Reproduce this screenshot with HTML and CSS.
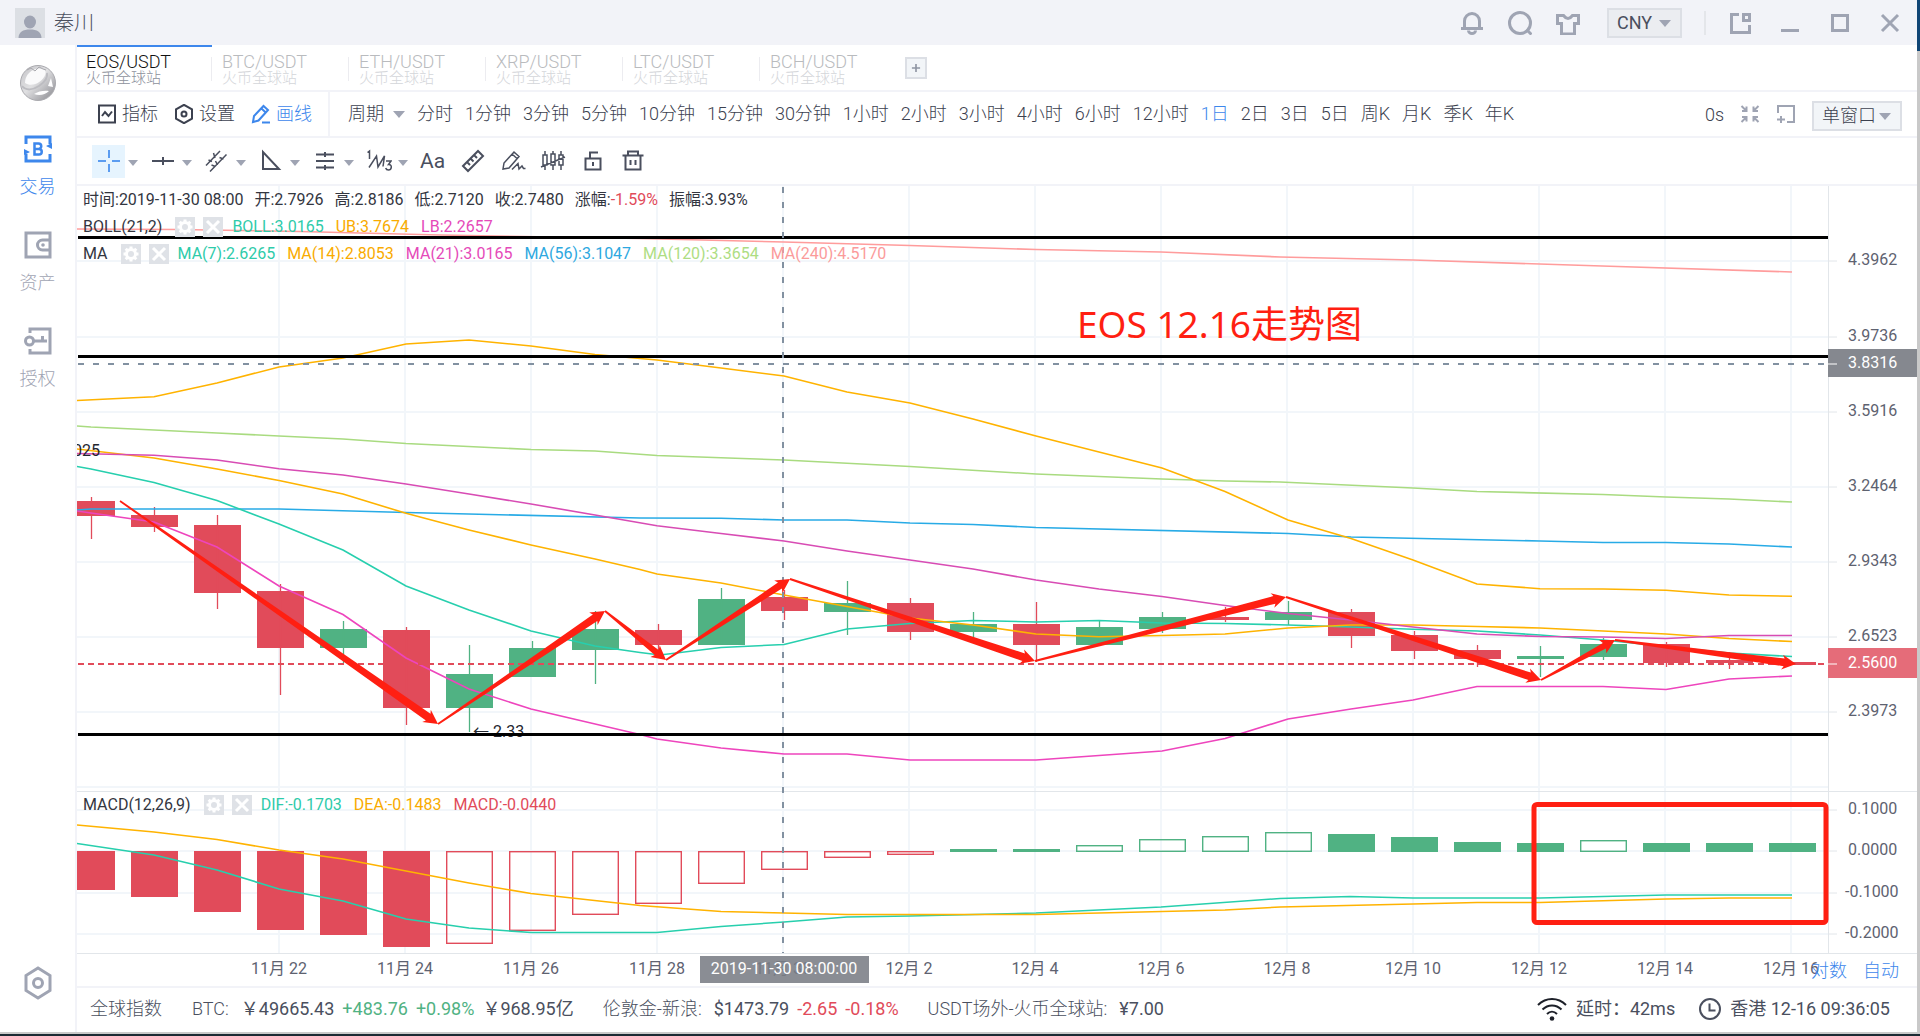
FILE: index.html
```html
<!DOCTYPE html>
<html lang="zh-CN">
<head>
<meta charset="utf-8">
<title>EOS/USDT</title>
<link rel="stylesheet" href="styles.css">
</head>
<body>
<div class="window">
  <header class="titlebar">
    <svg class="avatar" viewBox="0 0 30 30" aria-hidden="true"><rect width="30" height="30" fill="#dcdfe4"/><ellipse cx="15" cy="14" rx="6" ry="6.5" fill="#9fa4b3"/><path d="M3.500 30c0-6 4.500-8.500 11.500-8.500s11.500 2.500 11.500 8.500z" fill="#9fa4b3"/></svg>
    <span class="user">秦川</span>
    <div class="title-tools">
      <button class="icon-btn" aria-label="通知"><svg viewBox="0 0 24 24"><path d="M4.500 17.500V10a7.500 7.500 0 0 1 15 0v7.500M1 17.500h22M8.500 19.500a3.500 3 0 0 0 7 0"/></svg></button>
      <button class="icon-btn" aria-label="搜索"><svg viewBox="0 0 24 24"><circle cx="12" cy="12" r="10.500"/><path d="M18.500 18.500l5 5"/></svg></button>
      <button class="icon-btn" aria-label="皮肤"><svg viewBox="0 0 24 24"><path d="M1.500 4.500h6q4.500 6 9 0h6v8h-4V23h-13V12.500h-4z"/></svg></button>
      <span class="picker picker-currency"><select aria-label="货币"><option>CNY</option></select></span>
    </div>
    <i class="title-divider"></i>
    <div class="window-tools">
      <button class="icon-btn" aria-label="弹出"><svg viewBox="0 0 24 24"><path d="M11 3.500H3.500v18h18V14M15.500 3.500h6v6h-6z"/></svg></button>
      <button class="icon-btn" aria-label="最小化"><svg viewBox="0 0 24 24"><path d="M3 19.500h18"/></svg></button>
      <button class="icon-btn" aria-label="最大化"><svg viewBox="0 0 24 24"><path d="M4.500 4.500h15v15h-15z"/></svg></button>
      <button class="icon-btn" aria-label="关闭"><svg viewBox="0 0 24 24"><path d="M4 4l16 16M20 4L4 20"/></svg></button>
    </div>
  </header>

  <div class="body">
    <nav class="sidebar">
      <svg class="logo" viewBox="0 0 36 36" aria-hidden="true">
        <defs><linearGradient id="ball" x1="0" y1="0" x2="1" y2="1"><stop offset="0" stop-color="#c4c4c8"/><stop offset=".45" stop-color="#e0e0e2"/><stop offset="1" stop-color="#85858b"/></linearGradient></defs>
        <circle cx="18" cy="18" r="17.500" fill="url(#ball)" stroke="#a9a9ae"/>
        <path d="M5 18C5 10 11 4 19 3.500c8 0 8 5 4 10S11 22 5 18z" fill="#fafafb"/>
        <path d="M7 5l4-2 4 3 4-4 4 2 3 1" fill="none" stroke="#a8a8ad"/>
        <path d="M28 21l3-8 2 9zM14 29c4-3 11-4 15-3-4 4-10 5-15 3z" fill="#fdfdfe"/>
        <path d="M2 21c4 5 11 4 17 0s9-8 8-13" fill="none" stroke="#bcbcc1" stroke-width="2"/>
      </svg>
      <a class="nav-item active" href="#trade"><svg viewBox="0 0 28 28"><path d="M2 9V2h24v7M2 19v7h24v-7" stroke-width="3" fill="none"/><path class="solid" d="M0 14l6 3-6 3zM28 14l-6-3 6-3z"/><path d="M10.500 8.500v11h4.500a2.700 2.700 0 0 0 0-5.500h-4.500h4a2.600 2.600 0 0 0 0-5.500z" stroke-width="2.500" fill="none"/></svg><span>交易</span></a>
      <a class="nav-item" href="#assets"><svg viewBox="0 0 28 28"><path d="M2 2h24v24H2z" stroke-width="3" fill="none"/><path d="M26 9H18.500a5 5 0 0 0 0 10H26" stroke-width="3" fill="none"/><circle class="solid" cx="19" cy="14" r="1.800"/></svg><span>资产</span></a>
      <a class="nav-item" href="#auth"><svg viewBox="0 0 28 28"><path d="M6 6V2h20v24H6v-4" stroke-width="3" fill="none"/><circle cx="5.500" cy="14" r="4" stroke-width="3" fill="none"/><path d="M10 14h13M18.500 14V9" stroke-width="3"/></svg><span>授权</span></a>
      <button class="nav-settings" aria-label="设置"><svg viewBox="0 0 28 34"><path d="M14 2l12 7.500v15L14 32 2 24.500v-15z"/><circle cx="14" cy="17" r="4.500"/></svg></button>
    </nav>

    <main class="workspace">
      <div class="tabs">
        <button class="tab current"><b>EOS/USDT</b><small>火币全球站</small></button>
        <button class="tab"><b>BTC/USDT</b><small>火币全球站</small></button>
        <button class="tab"><b>ETH/USDT</b><small>火币全球站</small></button>
        <button class="tab"><b>XRP/USDT</b><small>火币全球站</small></button>
        <button class="tab"><b>LTC/USDT</b><small>火币全球站</small></button>
        <button class="tab"><b>BCH/USDT</b><small>火币全球站</small></button>
        <button class="add-tab" aria-label="添加"><svg viewBox="0 0 22 22"><path d="M11 6v10M6 11h10"/></svg></button>
      </div>

      <div class="toolbar">
        <div class="modes">
          <button class="mode"><svg viewBox="0 0 20 20"><path d="M2 1.500h16v17H2zM5 12l3-4 3.500 4L15 7.500"/></svg>指标</button>
          <button class="mode"><svg viewBox="0 0 20 20"><path d="M10 .800l8 4.600v9.200l-8 4.600-8-4.600V5.400z"/><circle cx="10" cy="10" r="2.500"/></svg>设置</button>
          <button class="mode on"><svg viewBox="0 0 20 20"><path d="M2 18l1-6L12.500 2l4.500 4L7.500 16.500zM10.500 4.500l4.200 4M11 18.500h8"/></svg>画线</button>
        </div>
        <div class="periods">
          <button class="period menu">周期<i class="caret"></i></button>
          <button class="period">分时</button><button class="period">1分钟</button><button class="period">3分钟</button><button class="period">5分钟</button><button class="period">10分钟</button><button class="period">15分钟</button><button class="period">30分钟</button><button class="period">1小时</button><button class="period">2小时</button><button class="period">3小时</button><button class="period">4小时</button><button class="period">6小时</button><button class="period">12小时</button><button class="period on">1日</button><button class="period">2日</button><button class="period">3日</button><button class="period">5日</button><button class="period">周K</button><button class="period">月K</button><button class="period">季K</button><button class="period">年K</button>
        </div>
        <div class="view-tools">
          <span>0s</span>
          <button class="view-btn" aria-label="收缩"><svg viewBox="0 0 20 20"><path d="M1.500 2l5 5M6.500 2.500V7H2M18.500 2l-5 5M13.500 2.500V7H18M1.500 18l5-5M6.500 17.500V13H2M18.500 18l-5-5M13.500 17.500V13H18"/></svg></button>
          <button class="view-btn" aria-label="添加窗口"><svg viewBox="0 0 20 20"><path d="M2 9V2h16v16h-7M5 12v7M1 15.500h8"/></svg></button>
          <span class="picker picker-window"><select aria-label="窗口布局"><option>单窗口</option></select></span>
        </div>
      </div>

      <div class="drawbar">
        <button class="tool on" aria-label="十字光标"><svg viewBox="0 0 24 24"><path d="M12 1v8M12 15v8M1 12h8M15 12h8"/></svg></button><button class="more" aria-label="更多光标"><i class="caret"></i></button>
        <button class="tool" aria-label="直线"><svg viewBox="0 0 24 24"><path d="M1 12h22M12 8v8"/></svg></button><button class="more" aria-label="更多直线"><i class="caret"></i></button>
        <button class="tool" aria-label="平行线"><svg viewBox="0 0 24 24"><path class="fine" d="M1 16.500L15 2M5 22.500L21.500 5.500M8.500 4l1.500 5M3.500 11l3.500 1.500M10.500 12l2 4M14.500 8.500l4 1.500M6.500 16l4 1.500"/></svg></button><button class="more" aria-label="更多平行线"><i class="caret"></i></button>
        <button class="tool" aria-label="图形"><svg viewBox="0 0 24 24"><path d="M4 3v17h16z"/></svg></button><button class="more" aria-label="更多图形"><i class="caret"></i></button>
        <button class="tool" aria-label="斐波那契"><svg viewBox="0 0 24 24"><path d="M3 5.500h18M3 12h18M3 18.500h18M12 3v5M12 16v5"/></svg></button><button class="more" aria-label="更多斐波那契"><i class="caret"></i></button>
        <button class="tool" aria-label="波浪"><svg viewBox="0 0 26 24"><path class="fine" d="M1.500 3.500L3.500 2v8M3 18.500L10.500 7l1.500 11 6.500-11-1.500 10.500M20 12h5l-2.500 3.500c4-.5 3.500 5.500 0 5.500-1.500 0-2.500-.8-2.800-2"/></svg></button><button class="more" aria-label="更多波浪"><i class="caret"></i></button>
        <button class="tool text-tool">Aa</button>
        <button class="tool" aria-label="尺子"><svg viewBox="0 0 24 24"><path d="M2 17L17 2l5 5L7 22zM6 13l3 3M9.500 9.500l3 3M13 6l3 3"/></svg></button>
        <button class="tool" aria-label="画笔"><svg viewBox="0 0 26 24"><path class="fine" d="M3 20l1-6L14 3l5 4.500L9 19zM12 5l5 4.500M12 20.500l6-6 1 5.500 3-3 1.500 2.500h2"/></svg></button>
        <button class="tool" aria-label="K线"><svg viewBox="0 0 26 24"><path class="fine" d="M3 6h4v10H3zM11 5h4v11h-4zM19 6h4v10h-4zM5 2v4M5 16v5M13 2v3M13 16v5M21 2v4M21 16v5M1 18L25 8"/></svg></button>
        <button class="tool" aria-label="锁定"><svg viewBox="0 0 24 24"><path d="M4.500 9.500h15v11h-15zM9 9.500v-6h8M12 13v4"/></svg></button>
        <button class="tool" aria-label="删除"><svg viewBox="0 0 24 24"><path d="M1.500 6.500h21M4.500 6.500v14h15v-14M7 6V2.500h10V6M9.500 11v5M14.500 11v5"/></svg></button>
      </div>

      <section class="chart">
        <svg class="plot" viewBox="77 186 1840 800" role="img" aria-label="EOS/USDT K线图"></svg>
        <div class="legend legend-price">
          <p class="quote"><span>时间:2019-11-30 08:00</span><span>开:2.7926</span><span>高:2.8186</span><span>低:2.7120</span><span>收:2.7480</span><span>涨幅:<em>-1.59%</em></span><span>振幅:3.93%</span></p>
          <p class="study">BOLL(21,2)<button class="chip" aria-label="BOLL 设置"><svg viewBox="0 0 20 20"><circle cx="10" cy="10" r="4.500"/><path d="M10 2.500v3M10 14.500v3M2.500 10h3M14.500 10h3M4.700 4.700l2 2M13.300 13.300l2 2M4.700 15.300l2-2M13.300 6.700l2-2"/></svg></button><button class="chip" aria-label="关闭 BOLL"><svg viewBox="0 0 20 20"><path d="M4 4l12 12M16 4L4 16"/></svg></button><span class="teal">BOLL:3.0165</span><span class="amber">UB:3.7674</span><span class="pink">LB:2.2657</span></p>
          <p class="study">MA<button class="chip" aria-label="MA 设置"><svg viewBox="0 0 20 20"><circle cx="10" cy="10" r="4.500"/><path d="M10 2.500v3M10 14.500v3M2.500 10h3M14.500 10h3M4.700 4.700l2 2M13.300 13.300l2 2M4.700 15.300l2-2M13.300 6.700l2-2"/></svg></button><button class="chip" aria-label="关闭 MA"><svg viewBox="0 0 20 20"><path d="M4 4l12 12M16 4L4 16"/></svg></button><span class="teal">MA(7):2.6265</span><span class="amber">MA(14):2.8053</span><span class="pink">MA(21):3.0165</span><span class="sky">MA(56):3.1047</span><span class="lime">MA(120):3.3654</span><span class="salmon">MA(240):4.5170</span></p>
        </div>
        <div class="legend legend-macd">
          <p class="study">MACD(12,26,9)<button class="chip" aria-label="MACD 设置"><svg viewBox="0 0 20 20"><circle cx="10" cy="10" r="4.500"/><path d="M10 2.500v3M10 14.500v3M2.500 10h3M14.500 10h3M4.700 4.700l2 2M13.300 13.300l2 2M4.700 15.300l2-2M13.300 6.700l2-2"/></svg></button><button class="chip" aria-label="关闭 MACD"><svg viewBox="0 0 20 20"><path d="M4 4l12 12M16 4L4 16"/></svg></button><span class="teal">DIF:-0.1703</span><span class="amber">DEA:-0.1483</span><span class="red">MACD:-0.0440</span></p>
        </div>
        <div class="scale-tools"><button>对数</button><button>自动</button></div>
      </section>

      <footer class="status">
        <span class="index">全球指数</span>
        <span class="quote-group"><span class="name">BTC:</span><span>￥49665.43</span><span class="up">+483.76</span><span class="up">+0.98%</span><span>￥968.95亿</span></span>
        <span class="quote-group"><span class="name">伦敦金-新浪:</span><span>$1473.79</span><span class="down">-2.65</span><span class="down">-0.18%</span></span>
        <span class="quote-group"><span class="name">USDT场外-火币全球站:</span><span>¥7.00</span></span>
        <span class="net"><svg viewBox="0 0 30 24" aria-hidden="true"><path d="M1 8C9 0 21 0 29 8M5.500 12.500c5.500-5.500 13.500-5.500 19 0M10 17c3-3 7-3 10 0"/><circle cx="15" cy="21.500" r="2.300"/></svg>延时：42ms</span>
        <span class="clock"><svg viewBox="0 0 22 22" aria-hidden="true"><circle cx="11" cy="11" r="10"/><path d="M10.500 5.500v7h6"/></svg>香港 12-16 09:36:05</span>
      </footer>
    </main>
  </div>
</div>
<script src="chart.js"></script>
</body>
</html>
```
FILE: styles.css
```css
* { box-sizing: border-box; }

body {
  margin: 0;
  padding: 0 3px 4px 0;
  min-height: 100vh;
  font-family: Roboto, "Noto Sans CJK SC", sans-serif;
  font-size: 18px;
  color: #4a4f5e;
  background: linear-gradient(#0f4575 51px, #c9c9c9 51px, #c9c9c9 calc(100% - 2px), #1b2a33 calc(100% - 2px));
}

button, select {
  font: inherit;
  color: inherit;
  background: none;
  border: 0;
  padding: 0;
  margin: 0;
  white-space: nowrap;
}

svg { display: block; }
p { margin: 0; }

.window {
  min-height: calc(100vh - 4px);
  display: flex;
  flex-direction: column;
  background: #fff;
}

/* title bar */
.titlebar {
  height: 45px;
  display: flex;
  align-items: center;
  padding: 0 15px;
  background: #f2f3f8;
}
.avatar { width: 30px; height: 30px; }
.user { margin-left: 9px; font-size: 20px; font-weight: 300; line-height: 30px; }
.title-tools { margin-left: auto; display: flex; align-items: center; gap: 24px; }
.icon-btn svg { width: 24px; height: 24px; fill: none; stroke: #9fa4b3; stroke-width: 3; }
.title-divider { width: 2px; height: 24px; margin: 0 22px; background: #e4e6ea; }
.window-tools { display: flex; gap: 26px; }

.picker {
  position: relative;
  display: flex;
  height: 30px;
  border: 2px solid #dcdfe5;
  background: #f2f5f8;
}
.picker select { width: 100%; appearance: none; line-height: 26px; }
.picker::after {
  content: "";
  position: absolute;
  right: 9px;
  top: 10px;
  border: 6px solid transparent;
  border-top: 7px solid #9fa4b3;
  border-bottom: 0;
  pointer-events: none;
}
.picker-currency { width: 75px; margin-left: 3px; padding-left: 8px; background: #ebedf1; }
.picker-window { width: 90px; margin-top: 3px; padding-left: 8px; }

/* sidebar */
.body { flex: 1; display: flex; }
.sidebar {
  width: 77px;
  padding: 20px 0 32px;
  border-right: 2px solid #f2f3f8;
  display: flex;
  flex-direction: column;
  align-items: center;
}
.logo { width: 36px; height: 36px; margin-bottom: 34px; }
.nav-item {
  height: 96px;
  display: flex;
  flex-direction: column;
  align-items: center;
  gap: 10px;
  color: #9fa4b3;
  font-weight: 300;
  line-height: 28px;
  text-decoration: none;
}
.nav-item svg { width: 28px; height: 28px; stroke: currentColor; }
.nav-item .solid { fill: currentColor; stroke: none; }
.nav-item.active { color: #3d87ec; }
.nav-settings { margin-top: auto; }
.nav-settings svg { width: 28px; height: 34px; fill: none; stroke: #9fa4b3; stroke-width: 3; }

/* market tabs */
.workspace { flex: 1; min-width: 0; display: flex; flex-direction: column; }
.tabs { height: 47px; display: flex; border-bottom: 2px solid #f2f3f8; }
.tab {
  width: 137px;
  display: flex;
  flex-direction: column;
  align-items: flex-start;
  padding: 7px 0 0 10px;
  border-top: 2px solid transparent;
  text-align: left;
  color: #b9bbbe;
  background: linear-gradient(#ececf0, #ececf0) right 10px / 1px 24px no-repeat;
}
.tab:nth-child(6) { background: none; }
.tab b { font-weight: 300; line-height: 16px; }
.tab small { font-size: 15px; font-weight: 300; line-height: 16px; color: #d4d6da; }
.tab.current { width: 135px; padding-left: 9px; color: #111; border-top-color: #3d87ec; }
.tab.current small { color: #8d919c; }
.add-tab { align-self: center; margin-left: 8px; }
.add-tab svg { width: 22px; height: 22px; stroke: #8f95a3; stroke-width: 2; border: 2px solid #dcdfe5; background: #f2f5f8; }

/* indicator and period bar */
.toolbar { height: 46px; display: flex; border-bottom: 2px solid #f2f3f8; font-weight: 300; color: #3c414f; }
.modes { display: flex; align-items: center; gap: 16px; padding: 0 16px 0 20px; border-right: 2px solid #f2f3f8; }
.mode { display: flex; align-items: center; gap: 5px; line-height: 26px; }
.mode svg { width: 20px; height: 20px; fill: none; stroke: currentColor; stroke-width: 2; }
.mode.on { color: #3d87ec; }
.periods { display: flex; align-items: center; gap: 12px; padding-left: 18px; }
.period { line-height: 26px; font-weight: 300; }
.period.on { color: #3d87ec; }
.period.menu { display: flex; align-items: center; gap: 9px; }
.caret { display: block; border: 5px solid transparent; border-top: 6px solid #9fa4b3; border-bottom: 0; }
.period .caret { border-width: 7px 6px 0; }
.view-tools { margin-left: auto; padding-right: 15px; display: flex; align-items: center; gap: 16px; }
.view-btn svg { width: 20px; height: 20px; fill: none; stroke: #9fa4b3; stroke-width: 2; }

/* drawing tools */
.drawbar { height: 48px; display: flex; align-items: center; padding-left: 15px; border-bottom: 2px solid #f2f3f8; }
.tool { width: 33px; height: 33px; display: grid; place-items: center; margin-right: 7px; }
.tool:has(+ .more) { margin-right: 3px; }
.tool svg { height: 24px; fill: none; stroke: #4a4f5e; stroke-width: 2; }
.tool .fine { stroke-width: 1.5; }
.tool.on { background: #e6f4fe; }
.tool.on svg { stroke: #5b9cf0; }
.text-tool { font-size: 21px; line-height: 33px; }
.more { width: 10px; margin-right: 8px; padding-top: 4px; }

/* chart */
.chart { position: relative; flex: 1; font-size: 16px; }
.plot { width: 100%; height: auto; font-size: 16px; }
.plot .axis { fill: #5e6270; }
.plot .mid { text-anchor: middle; }
.plot .flag { fill: #fff; }
.plot .note { fill: #23262f; }
.plot .headline { font-family: "Noto Sans", "Noto Sans CJK SC", sans-serif; font-size: 37px; fill: #ff1f12; }

.legend { position: absolute; left: 6px; color: #33363f; line-height: 27px; white-space: nowrap; }
.legend-price { top: 0; }
.legend-macd { top: 605px; }
.quote { display: flex; gap: 11px; height: 27px; }
.quote em { font-style: normal; color: #e14b5a; }
.study { display: flex; align-items: center; height: 27px; }
.study span { margin-left: 12px; }
.study .chip + span { margin-left: 9px; }
.chip { margin-left: 8px; }
.chip svg { width: 20px; height: 20px; fill: none; stroke: #fff; stroke-width: 3; background: #dfe2e7; }
.study .chip:first-of-type { margin-left: 13px; }
.teal { color: #2ecbaa; }
.amber { color: #f9ab00; }
.pink { color: #e54ab9; }
.sky { color: #2ea8e0; }
.lime { color: #aedd83; }
.salmon { color: #fb9b9b; }
.red { color: #e14b5a; }

.scale-tools { position: absolute; right: 18px; bottom: 2px; display: flex; gap: 16px; font-size: 18px; font-weight: 300; line-height: 26px; color: #3d87ec; }

/* status bar */
.status { height: 46px; display: flex; align-items: center; padding: 0 27px 2px 13px; border-top: 2px solid #f2f3f8; line-height: 28px; white-space: nowrap; }
.index { margin-right: 30px; font-weight: 300; }
.quote-group { display: flex; gap: 8px; margin-right: 29px; }
.quote-group .name { margin-right: 4px; font-weight: 300; }
.up { color: #50b283; }
.down { color: #e14b5a; }
.net, .clock { display: flex; align-items: center; gap: 9px; }
.net { margin-left: auto; margin-right: 24px; }
.net svg { width: 30px; height: 24px; fill: none; stroke: #1d2029; stroke-width: 2; }
.net circle { fill: #1d2029; stroke: none; }
.clock svg { width: 22px; height: 22px; fill: none; stroke: #4a4f5e; stroke-width: 2; }
```
FILE: chart.js
```js
const RED = '#e14b5a', GREEN = '#50b283';
const LEFT = 77, AXIS = 1828, STEP = 63, FIRST = 91, HALF = 23;
const out = [];
const line = (x1, y1, x2, y2, stroke, w, dash) =>
  out.push(`<line x1="${x1}" y1="${y1}" x2="${x2}" y2="${y2}" stroke="${stroke}" stroke-width="${w}"${dash ? ` stroke-dasharray="${dash}"` : ''}/>`);
const rect = (x, y, w, h, attrs) => out.push(`<rect x="${x}" y="${y}" width="${w}" height="${h}" ${attrs}/>`);
const text = (x, y, s, cls) => out.push(`<text x="${x}" y="${y}" class="${cls}">${s}</text>`);
const centre = i => FIRST + STEP * i;

// grid
for (let i = 0; i < 13; i++) line(279 + 126 * i, 186, 279 + 126 * i, 953, '#f2f6fa', 2);
const prices = [[261, '4.3962'], [337, '3.9736'], [412, '3.5916'], [487, '3.2464'], [562, '2.9343'], [637, '2.6523'], [712, '2.3973'],
  [810, '0.1000'], [851, '0.0000'], [893, '-0.1000'], [934, '-0.2000']];
prices.forEach(([y]) => { line(LEFT, y, AXIS, y, '#f2f6fa', 2); line(AXIS, y, AXIS + 9, y, '#e2e6ea', 1); });
line(LEFT, 787, AXIS, 787, '#f2f6fa', 2);
line(LEFT, 791.5, 1917, 791.5, '#e2e6ea', 1);
line(LEFT, 953.5, 1917, 953.5, '#e2e6ea', 1);
line(AXIS + .5, 186, AXIS + .5, 953, '#e2e6ea', 1);

// candles: colour, body top, body bottom, wick top, wick bottom
const candles = [
  [RED, 501, 516, 497, 539], [RED, 515, 527, 507, 532], [RED, 525, 593, 515, 609], [RED, 591, 648, 584, 695],
  [GREEN, 629, 648, 621, 663], [RED, 630, 708, 627, 725], [GREEN, 674, 708, 645, 732], [GREEN, 648, 677, 641, 677],
  [GREEN, 629, 650, 611, 684], [RED, 630, 645, 624, 652], [GREEN, 599, 645, 588, 645], [RED, 597, 611, 590, 620],
  [GREEN, 603, 612, 581, 635], [RED, 603, 632, 598, 640], [GREEN, 624, 632, 612, 638], [RED, 624, 645, 602, 662],
  [GREEN, 627, 645, 621, 645], [GREEN, 617, 629, 612, 633], [RED, 617, 620, 607, 622], [GREEN, 612, 620, 601, 625],
  [RED, 612, 636, 609, 648], [RED, 635, 651, 631, 659], [RED, 650, 659, 645, 667], [GREEN, 656, 659, 646, 677],
  [GREEN, 644, 657, 638, 660], [RED, 644, 663, 642, 667], [RED, 660, 663, 652, 669], [RED, 662, 665, 662, 665]];
candles.forEach(([c, a, b, t, u], i) => {
  rect(centre(i) - HALF, a, HALF * 2 + 1, b - a, `fill="${c}"`);
  line(centre(i) + .5, t, centre(i) + .5, u, c, 1.3);
});

// MACD bars: bar edge, solid
const macd = [[890, 1], [897, 1], [912, 1], [930, 1], [935, 1], [947, 1], [944, 0], [931, 0], [915, 0], [904, 0], [884, 0], [870, 0], [858, 0], [855, 0],
  [849, 1], [849, 1], [845, 0], [839, 0], [836, 0], [832, 0], [834, 1], [837, 1], [842, 1], [843, 1], [840, 0], [843, 1], [843, 1], [843, 1]];
macd.forEach(([edge, solid], i) => {
  const c = i < 14 ? RED : GREEN, top = Math.min(edge, 851), bottom = Math.max(edge, 852);
  if (solid) rect(centre(i) - HALF, top, HALF * 2 + 1, bottom - top, `fill="${c}"`);
  else rect(centre(i) - HALF + .7, top + .7, HALF * 2 - .4, bottom - top - 1.4, `fill="none" stroke="${c}" stroke-width="1.4"`);
});

// averages and bands
const curves = {
  '#ff9c9c': '77,229 179,229.5 300,231.5 440,235 640,238.5 784,242 910,245.5 1036,249.5 1161,252 1280,257 1413,260 1602,266 1792,272',
  '#a9db80': '77,426 91,427 217,433 279,436 343,439 406,443.5 531,449.5 595,451 657,455.5 784,460 910,466.5 1036,474 1162,479 1225,481 1280,482 1413,488 1477,491.5 1603,494.5 1666,497 1729,499 1792,502',
  '#28abe6': '77,510 91,509 279,509 406,512.5 640,518 721,518.3 784,520 847,520 910,523 973,524.5 1036,527.5 1288,533.5 1351,537 1540,541 1603,542.5 1666,542.5 1729,544 1792,547',
  '#27cfae': '77,466.5 91,469 154,482.5 217,500.5 279,524 343,550 406,586 469,610 531,631 595,646 640,652.5 660,655 721,647.5 784,644.5 847,629 910,623.5 973,620.500 1036,622 1099,620.500 1162,623 1225,623.5 1288,625 1351,627 1413,629.3 1477,631 1540,635 1603,640 1666,646.5 1729,653 1792,656.5',
  '#ffb300': '77,400.5 154,396.7 217,383 279,367 343,358 406,344 469,340 531,346 595,354.5 657,360 721,368 784,376 847,392 910,403 973,419 1036,436 1099,452 1162,468 1225,491.5 1288,520 1351,538.5 1413,560 1477,584 1540,588.700 1603,589 1666,590.3 1729,595 1792,596.3',
  '#feb301': '77,449 154,458 217,469 279,480.5 343,494 406,513.3 469,530 531,545 595,559 640,569.5 657,574 721,583 784,595 847,606.5 910,618 973,625 1036,634 1099,636.7 1162,635.5 1225,634 1288,628 1351,625 1413,625 1477,626.5 1540,628 1603,631 1666,634 1729,638.5 1792,641.5',
  '#d84cb4': '77,453.5 154,455.3 217,460 279,468.7 343,475 406,484 469,494 531,504 595,515 657,525.7 721,533.5 784,541 847,551 910,560 973,569 1036,580 1099,589 1162,596.5 1225,605.5 1288,613.5 1351,620 1413,627 1477,634 1540,636.5 1603,637 1666,638.5 1729,635.5 1792,635.5',
  '#ee45bd': '77,511 154,522 217,547 279,586 343,614.5 406,658 469,689 531,709 640,734.5 657,739 721,748 784,754 847,754 910,760 1036,760 1099,755.5 1162,751 1225,738.5 1288,719 1351,709 1413,700 1477,686.5 1603,686.5 1666,689.5 1729,679 1792,676',
  '#27cfad': '77,843.5 154,855 217,870 279,889 343,901 406,919 469,928 531,932.5 657,932.5 721,926.5 784,922 847,917 910,916 1036,913 1161,907 1280,898.5 1350,896.5 1413,898 1540,898 1666,895 1792,895',
  '#ffb301': '77,825 154,832 217,839.5 279,850 343,859 406,871 469,883 531,893.5 640,905.5 721,911.5 784,913 847,914.5 1036,914.5 1225,910 1280,907 1413,904 1477,902.5 1540,902.5 1666,899 1729,898 1792,898'
};
for (const [c, pts] of Object.entries(curves)) out.push(`<polyline points="${pts}" fill="none" stroke="${c}" stroke-width="1.6"/>`);

// low / high marks, support and resistance
text(100, 456, '025', 'note" text-anchor="end');
text(473, 737, '← 2.33', 'note');
[237.500, 356.5, 734.5].forEach(y => line(LEFT + 1, y, AXIS, y, '#000', 3));
line(LEFT + 1, 664, AXIS, 664, RED, 2, '6 4');
line(LEFT + 1, 364, AXIS, 364, '#8291a1', 2, '6 9');
line(783, 187, 783, 953, '#8291a1', 2, '6 9');

// trend arrows: a shaft that widens up to the head
const turns = [[120, 501], [438, 724], [605, 611], [666, 660], [790, 579], [1035, 661], [1286, 597], [1541, 680], [1615, 640], [1796, 664]];
for (let i = 1; i < turns.length; i++) {
  const [x1, y1] = turns[i - 1], [x2, y2] = turns[i];
  const len = Math.hypot(x2 - x1, y2 - y1), ux = (x2 - x1) / len, uy = (y2 - y1) / len;
  const w = Math.min(4, 2.6 + len / 150);
  const at = (d, o) => `${(x2 - ux * d - uy * o).toFixed(1)},${(y2 - uy * d + ux * o).toFixed(1)}`;
  out.push(`<polygon fill="#ff1f12" points="${[at(len, .9), at(12, w), at(14, 7.500), at(0, 0), at(14, -7.500), at(12, -w), at(len, -.9)].join(' ')}"/>`);
}
rect(1534, 804.5, 292, 118, 'rx="3" fill="none" stroke="#ff1f12" stroke-width="5"');
text(1077, 338, 'EOS 12.16走势图', 'headline');

// axis labels
prices.forEach(([y, s]) => text(s[0] === '-' ? 1845 : 1848, y + 4, s, 'axis'));
['11月 22', '11月 24', '11月 26', '11月 28', '11月 30', '12月 2', '12月 4', '12月 6', '12月 8', '12月 10', '12月 12', '12月 14', '12月 16']
  .forEach((s, i) => text(279 + 126 * i, 974, s, 'axis mid'));
rect(700, 956, 169, 27, 'fill="#7a7d85" fill-opacity=".88"');
text(784, 974, '2019-11-30 08:00:00', 'flag mid');
rect(AXIS, 349, 89, 28, 'fill="#85888f"');
line(AXIS, 364, AXIS + 9, 364, '#fff', 1);
text(1848, 368, '3.8316', 'flag');
rect(AXIS, 648, 89, 30, 'fill="#e56c79"');
line(AXIS, 664, AXIS + 9, 664, '#fff', 1);
text(1848, 668, '2.5600', 'flag');

document.querySelector('.plot').innerHTML = out.join('');
```
